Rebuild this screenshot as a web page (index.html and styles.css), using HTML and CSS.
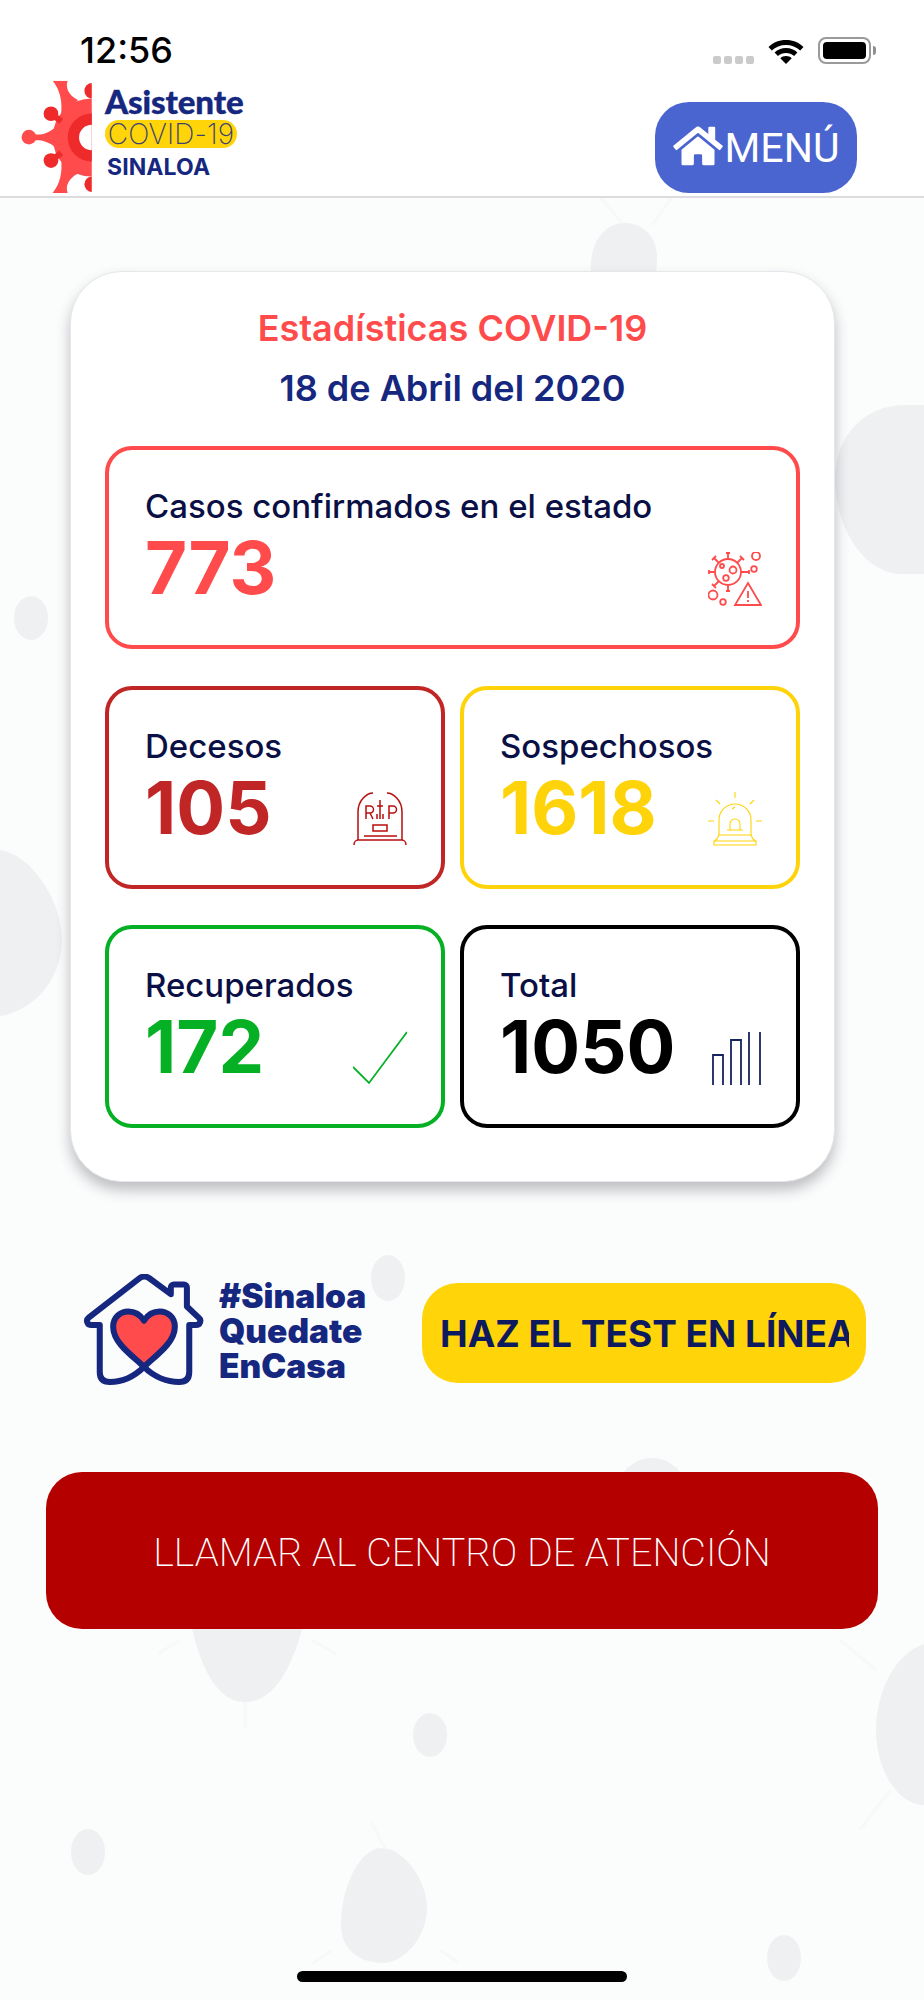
FILE: index.html
```html
<!DOCTYPE html>
<html lang="es">
<head>
<meta charset="utf-8">
<title>Asistente COVID-19 Sinaloa</title>
<link rel="stylesheet" href="styles.css">
</head>
<body>
<svg class="bg" width="924" height="2000" viewBox="0 0 924 2000" aria-hidden="true">
  <g fill="#eff0f2">
    <path d="M591 262c2-24 16-39 34-39 18 0 32 14 32 34 0 18-4 60-34 60-24 0-34-30-32-55z"/>
    <path d="M835 480c0-45 30-75 70-75h19v169h-22c-40 0-67-50-67-94z"/>
    <ellipse cx="31" cy="618" rx="17" ry="22"/>
    <path d="M0 850c30 4 62 50 62 90 0 42-32 72-62 76z"/>
    <ellipse cx="388" cy="1278" rx="17" ry="23"/>
    <path d="M180 1500c0-20 10-20 68-20 60 0 69 10 69 20 0 90-20 202-72 202-50 0-65-110-65-202z"/>
    <ellipse cx="652" cy="1490" rx="34" ry="32"/>
    <ellipse cx="430" cy="1735" rx="17" ry="22"/>
    <path d="M924 1644c-30 10-48 50-48 86 0 40 22 75 48 75z"/>
    <ellipse cx="88" cy="1852" rx="17" ry="23"/>
    <path d="M341 1925c0-40 20-77 40-77 24 0 46 34 46 60 0 30-24 55-44 55-24 0-42-14-42-38z"/>
    <ellipse cx="784" cy="1958" rx="17" ry="23"/>
  </g>
  <g fill="none" stroke="#f7f8f9" stroke-width="3">
    <path d="M245 1702v26M180 1640l-22 14M312 1640l24 14M600 197l22 26M672 197l-20 28M840 1640l36 30M860 1830l30-40M385 1848l-14-26M440 1950l18 12M332 1950l-20 14"/>
  </g>
</svg>

<header class="top">
  <div class="status">
    <span class="time">12:56</span>
    <div class="status-icons">
      <div class="signal"><i></i><i></i><i></i><i></i></div>
      <svg class="wifi" width="36" height="27" viewBox="0 0 36 27"><path d="M18 3C11 3 5 5.600 0.500 10l3.300 3.600C7.500 10 12.500 8 18 8s10.500 2 14.200 5.600l3.300-3.600C31 5.600 25 3 18 3z"/><path d="M18 11c-4.500 0-8.500 1.700-11.400 4.500l3.300 3.600c2.100-2 5-3.200 8.100-3.200s6 1.200 8.100 3.200l3.300-3.600C26.500 12.700 22.500 11 18 11z"/><path d="M18 19c-2.300 0-4.300.9-5.700 2.200L18 27l5.700-5.800C22.300 19.900 20.300 19 18 19z"/></svg>
      <div class="battery"><div class="battery-body"><div class="battery-fill"></div></div><div class="battery-nub"></div></div>
    </div>
  </div>
  <div class="bar">
    <div class="logo">
      <svg class="logo-virus" width="74" height="113" viewBox="60 238 220 338">
        <defs><clipPath id="vclip"><rect x="60" y="240" width="217" height="336"/></clipPath></defs>
        <g clip-path="url(#vclip)">
          <circle fill="#ff4b4b" cx="277" cy="410" r="117"/>
          <path fill="#ff4b4b" d="M160 240H205C198 258 205 282 236 298L185 345C190 300 182 268 160 240Z"/>
          <path fill="#ff4b4b" d="M160 576H205C198 558 205 534 236 518L185 473C190 516 182 548 160 576Z"/>
          <path fill="#ff4b4b" d="M90 398C118 404 140 404 172 376V442C140 416 118 416 90 420Z"/>
          <circle fill="#ff4b4b" cx="89" cy="409" r="22"/>
          <path fill="none" stroke="#ee2a2a" stroke-width="18" d="M155 339L186 362M155 479L186 456"/>
          <circle fill="#ee2a2a" cx="155" cy="339" r="22"/>
          <circle fill="#ee2a2a" cx="155" cy="479" r="22"/>
          <circle fill="#ee2a2a" cx="278" cy="270" r="23"/>
          <circle fill="#ee2a2a" cx="278" cy="550" r="23"/>
          <circle fill="#ee2a2a" cx="277" cy="410" r="72"/>
          <circle fill="#fff" cx="277" cy="410" r="38"/>
        </g>
      </svg>
      <div class="logo-text">
        <span class="logo-asistente">Asistente</span>
        <span class="logo-covid">COVID-19</span>
        <span class="logo-sinaloa">SINALOA</span>
      </div>
    </div>
    <div class="menu-btn">
      <svg class="menu-icon" width="50" height="44" viewBox="0 0 576 512"><path d="M280.370 148.260L96 300.110V464a16 16 0 0 0 16 16l112.060-.29a16 16 0 0 0 15.920-16V368a16 16 0 0 1 16-16h64a16 16 0 0 1 16 16v95.640a16 16 0 0 0 16 16.050L464 480a16 16 0 0 0 16-16V300L295.670 148.260a12.190 12.190 0 0 0-15.300 0zM571.600 251.470L488 182.560V44.050a12 12 0 0 0-12-12h-56a12 12 0 0 0-12 12v72.610L318.470 43a48 48 0 0 0-61 0L4.340 251.470a12 12 0 0 0-1.600 16.900l25.500 31A12 12 0 0 0 45.150 301l235.220-193.740a12.190 12.190 0 0 1 15.300 0L530.900 301a12 12 0 0 0 16.900-1.600l25.500-31a12 12 0 0 0-1.700-16.930z"/></svg>
      <span>MENÚ</span>
    </div>
  </div>
</header>

<main class="main">
  <section class="card">
    <h1 class="title">Estadísticas COVID-19</h1>
    <h2 class="date">18 de Abril del 2020</h2>
    <div class="grid">
      <div class="stat stat-wide stat-red">
        <div class="stat-label">Casos confirmados en el estado</div>
        <div class="stat-row">
          <span class="stat-num">773</span>
          <svg class="icon" width="54" height="54" viewBox="0 0 54 54" fill="none" stroke="currentColor" stroke-width="1.800">
            <circle cx="20" cy="20" r="13"/><path d="M20 1v6M18 1h4M20 33v6M18 39h4M1 20h6M1 18v4M33 20h8M41 18v4M6 6l5 5M4 8l4-4M34 6l-5 5M36 8l-4-4M6 34l5-5M4 32l4 4"/>
            <circle cx="25" cy="18" r="3.500"/><circle cx="14" cy="14" r="2"/><circle cx="18" cy="26" r="2.800"/>
            <circle cx="48" cy="4" r="4"/><circle cx="46" cy="17" r="2.800"/><circle cx="5" cy="43" r="4.500"/><circle cx="15" cy="50" r="2.800"/>
            <path d="M40 31l13 22H27z" fill="#fff"/><path d="M40 39v7M40 48v2"/>
          </svg>
        </div>
      </div>
      <div class="stat stat-dark">
        <div class="stat-label">Decesos</div>
        <div class="stat-row">
          <span class="stat-num">105</span>
          <svg class="icon" width="54" height="54" viewBox="0 0 54 54" fill="none" stroke="currentColor" stroke-width="1.500">
            <path d="M5 48V20C5 8 14 1 20 1M34 1c6 0 15 7 15 19v28"/><path d="M1 53c0-3 2-5 4-5h44c2 0 4 2 4 5M11 44h33"/>
            <rect x="20" y="33" width="14" height="6"/>
            <path d="M13 27V14h4a3.500 3.500 0 0 1 0 7h-4M17 21l3 6M27 8v19M24 14h6M24 22v5M30 22v5M36 27V14h4a3.500 3.500 0 0 1 0 7h-4"/>
          </svg>
        </div>
      </div>
      <div class="stat stat-yellow">
        <div class="stat-label">Sospechosos</div>
        <div class="stat-row">
          <span class="stat-num">1618</span>
          <svg class="icon" width="54" height="54" viewBox="0 0 54 54" fill="none" stroke="currentColor" stroke-width="1.100">
            <path d="M27 0v6M8 8l4 4M46 8l-4 4M0 29h6M48 29h6"/>
            <path d="M11 43V28a16 16 0 0 1 32 0v15"/><path d="M6 53v-4l3-2 2-4h32l2 4 3 2v4zM6 49h42"/>
            <path d="M22 38v-6a5 5 0 0 1 10 0v6M19 38h16M24 17l3-2"/>
          </svg>
        </div>
      </div>
      <div class="stat stat-green">
        <div class="stat-label">Recuperados</div>
        <div class="stat-row">
          <span class="stat-num">172</span>
          <svg class="icon" width="54" height="54" viewBox="0 0 54 54" fill="none" stroke="currentColor" stroke-width="1.800">
            <path d="M0 36l16 16L54 1"/>
          </svg>
        </div>
      </div>
      <div class="stat stat-black">
        <div class="stat-label">Total</div>
        <div class="stat-row">
          <span class="stat-num">1050</span>
          <svg class="icon icon-bars" width="50" height="54" viewBox="0 0 50 54" fill="none" stroke="#16235f" stroke-width="1.800">
            <path d="M1 54V24h10v30M19 54V9h10v45M37 54V1M48 54V1"/>
          </svg>
        </div>
      </div>
    </div>
  </section>

  <section class="cta">
    <div class="home-logo">
      <svg width="122" height="112" viewBox="68 68 364 334">
        <path fill="#ff4b4b" d="M250 340c-30-30-92-70-92-115 0-28 22-45 45-45 20 0 36 10 47 27 11-17 27-27 47-27 23 0 45 17 45 45 0 45-62 85-92 115z"/>
        <path fill="none" stroke="#16277f" stroke-width="18" stroke-linejoin="round" d="M250 345c30 30 70 45 105 45 20 0 30-10 30-30V220h20c12 0 18-14 8-22l-35-33V108c0-5-4-9-9-9h-30c-5 0-9 4-9 9v20l-65-48c-8-6-20-6-28 0L85 198c-10 8-4 22 8 22h25v140c0 20 10 30 30 30 35 0 72-15 102-45 30-30 92-70 92-120 0-28-22-45-45-45-20 0-36 10-47 27-11-17-27-27-47-27-23 0-45 17-45 45 0 50 62 90 92 120z"/>
      </svg>
      <div class="home-text">
        <span>#Sinaloa</span>
        <span>Quedate</span>
        <span>EnCasa</span>
      </div>
    </div>
    <div class="test-btn"><span>HAZ EL TEST EN LÍNEA</span></div>
  </section>

  <div class="call-btn">LLAMAR AL CENTRO DE ATENCIÓN</div>
</main>

<div class="home-indicator"></div>
</body>
</html>
```

FILE: styles.css
```css
* { box-sizing: border-box; }
html, body { margin: 0; padding: 0; }
body {
  position: relative;
  width: 924px;
  height: 2000px;
  overflow: hidden;
  background: #fbfcfc;
  font-family: "Inter", "Liberation Sans", sans-serif;
}
.bg { position: absolute; left: 0; top: 0; z-index: 0; }

.top {
  position: relative;
  z-index: 1;
  height: 198px;
  background: #fff;
  border-bottom: 2px solid #dcdcde;
}
.status {
  height: 80px;
  display: flex;
  justify-content: space-between;
  padding: 27px 48px 0 80px;
}
.time { font-size: 36px; font-weight: 500; line-height: 46px; color: #000; height: 46px; }
.status-icons { display: flex; align-items: flex-start; padding-top: 10px; }
.signal { display: flex; gap: 3px; margin-top: 19px; margin-right: 14px; }
.signal i { width: 8px; height: 8px; border-radius: 2px; background: #cbcbcb; }
.wifi { margin-right: 14px; }
.battery { display: flex; align-items: center; }
.battery-body { width: 53px; height: 27px; border: 2px solid #9a9a9a; border-radius: 8px; padding: 3px; }
.battery-fill { width: 100%; height: 100%; background: #000; border-radius: 4px; }
.battery-nub { width: 3px; height: 9px; margin-left: 2px; background: #8f8f8f; border-radius: 0 3px 3px 0; }

.bar { display: flex; justify-content: space-between; align-items: flex-start; padding: 0 67px 0 19px; }
.logo { display: flex; gap: 12px; align-items: flex-start; }
.logo-text { display: flex; flex-direction: column; align-items: flex-start; color: #16277f; }
.logo-asistente { font-family: "Lato", sans-serif; font-weight: 900; font-size: 33px; line-height: 36px; letter-spacing: -.1px; margin-top: 3px; -webkit-text-stroke: .4px #16277f; }
.logo-covid {
  background: #ffd409;
  color: #3a4272;
  border-radius: 14px;
  font-family: "Inter", sans-serif;
  font-weight: 200;
  font-size: 28px;
  line-height: 28px;
  height: 28px;
  width: 132px;
  text-align: center;
  letter-spacing: .1px;
  white-space: nowrap;
  margin-top: 1px;
}
.logo-sinaloa { font-family: "Inter", sans-serif; font-weight: 700; font-size: 23px; line-height: 24px; margin: 7px 0 0 2px; letter-spacing: .1px; }

.menu-btn {
  margin-top: 22px;
  width: 202px;
  height: 91px;
  background: #4a64d0;
  border-radius: 34px;
  color: #fff;
  display: flex;
  align-items: center;
  justify-content: center;
  gap: 2px;
  font-family: "Roboto", sans-serif;
  font-size: 41px;
}
.menu-icon { fill: #fff; margin-bottom: 3px; }

.main { position: relative; z-index: 1; display: flex; flex-direction: column; }
.card {
  margin: 73px 0 0 70px;
  width: 765px;
  height: 911px;
  padding: 27px 34px 0 34px;
  background: #fff;
  border-radius: 52px;
  border: 1px solid #e6e7ea;
  box-shadow: 0 8px 14px rgba(60, 60, 70, .32);
}
.title { margin: 0; text-align: center; font-size: 36px; font-weight: 600; line-height: 58px; color: #ff4b4b; }
.date { margin: 2px 0 0; text-align: center; font-size: 36px; font-weight: 600; line-height: 58px; color: #16277f; }
.grid {
  margin-top: 29px;
  display: grid;
  grid-template-columns: 340px 340px;
  grid-auto-rows: 203px;
  column-gap: 15px;
  row-gap: 36.5px;
}
.stat {
  border: 4px solid;
  border-radius: 27px;
  padding: 36px 34px 39px 36px;
  display: flex;
  flex-direction: column;
  justify-content: space-between;
  color: #ff4b4b;
}
.stat-wide { grid-column: 1 / -1; }
.stat-red { color: #ff4b4b; border-color: #ff4b4b; }
.stat-dark { color: #c02626; border-color: #c02626; }
.stat-yellow { color: #ffd309; border-color: #ffd309; }
.stat-green { color: #06b025; border-color: #06b025; }
.stat-black { color: #000; border-color: #000; }
.stat-dark .icon { color: #b80d0d; }
.stat-label { font-size: 33px; font-weight: 500; line-height: 40px; color: #0a1045; }
.stat-row { display: flex; justify-content: space-between; align-items: flex-end; height: 54px; }
.stat-num { font-size: 72.5px; font-weight: 700; line-height: 72px; margin-bottom: 2px; }
.icon { flex: none; display: block; }

.cta { display: flex; align-items: center; margin: 101px 0 0 83px; height: 100px; }
.home-logo { display: flex; align-items: center; gap: 14px; width: 339px; color: #16277f; margin-top: -6px; }
.home-text { display: flex; flex-direction: column; font-family: "Inter", sans-serif; font-weight: 900; font-size: 33.5px; line-height: 35px; margin-top: 3px; }
.test-btn {
  width: 444px;
  height: 100px;
  padding: 0 17px 0 18px;
  border-radius: 36px;
  background: #ffd409;
  display: flex;
  align-items: center;
}
.test-btn span {
  display: block;
  width: 100%;
  overflow: hidden;
  white-space: nowrap;
  font-size: 37px;
  font-weight: 700;
  color: #0d1b5e;
}
.call-btn {
  margin: 89px 0 0 46px;
  width: 832px;
  height: 157px;
  padding-top: 3px;
  background: #b50000;
  border-radius: 36px;
  display: flex;
  align-items: center;
  justify-content: center;
  color: #fff;
  font-family: "Roboto", sans-serif;
  font-weight: 200;
  font-size: 39.5px;
}
.home-indicator {
  position: absolute;
  z-index: 1;
  left: 297px;
  top: 1971px;
  width: 330px;
  height: 11px;
  border-radius: 6px;
  background: #000;
}
```
